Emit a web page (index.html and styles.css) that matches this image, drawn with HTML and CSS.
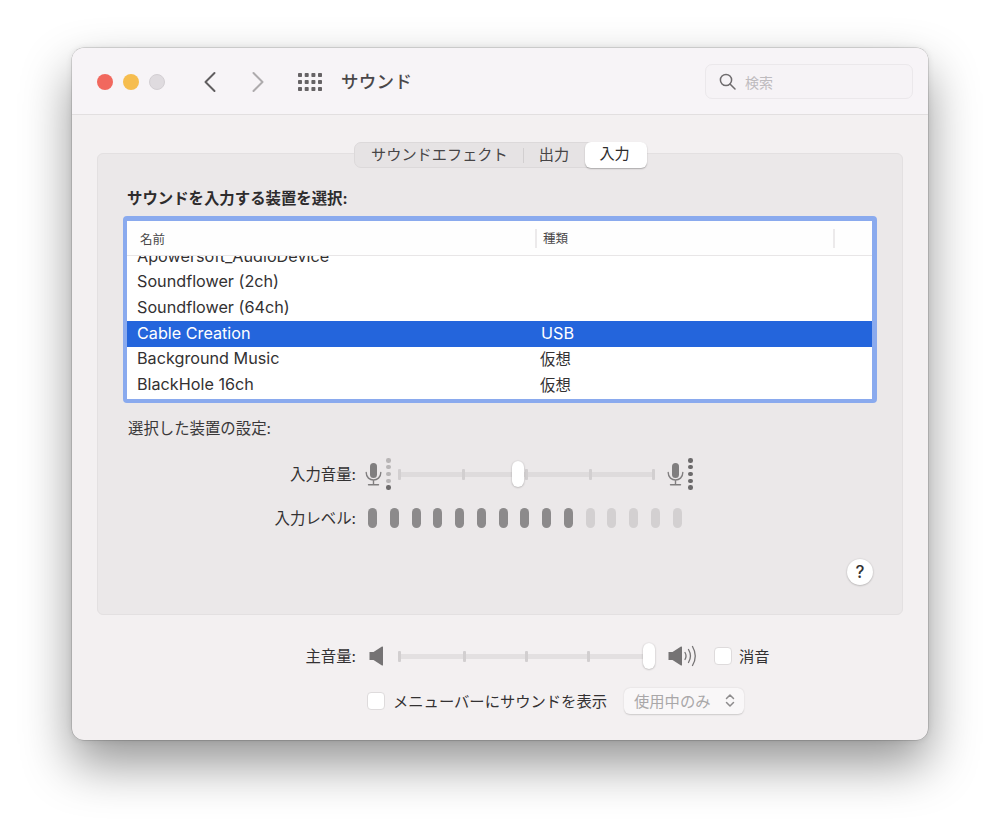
FILE: index.html
```html
<!DOCTYPE html>
<html lang="ja">
<head>
<meta charset="utf-8">
<title>サウンド</title>
<link rel="stylesheet" href="styles.css">
</head>
<body>
<main class="window">
  <header class="titlebar">
    <span class="light red"></span>
    <span class="light yellow"></span>
    <span class="light grey"></span>
    <svg class="chev back" width="14" height="22" viewBox="0 0 14 22"><path d="M11.5 2 2.5 11l9 9"/></svg>
    <svg class="chev forward" width="14" height="22" viewBox="0 0 14 22"><path d="M2.5 2l9 9-9 9"/></svg>
    <svg class="apps" width="24" height="18" viewBox="0 0 24 18">
      <g fill="#666365">
        <rect x="0" y="0" width="4" height="4" rx=".8"/><rect x="6.7" y="0" width="4" height="4" rx=".8"/><rect x="13.4" y="0" width="4" height="4" rx=".8"/><rect x="20" y="0" width="4" height="4" rx=".8"/>
        <rect x="0" y="7" width="4" height="4" rx=".8"/><rect x="6.7" y="7" width="4" height="4" rx=".8"/><rect x="13.4" y="7" width="4" height="4" rx=".8"/><rect x="20" y="7" width="4" height="4" rx=".8"/>
        <rect x="0" y="14" width="4" height="4" rx=".8"/><rect x="6.7" y="14" width="4" height="4" rx=".8"/><rect x="13.4" y="14" width="4" height="4" rx=".8"/><rect x="20" y="14" width="4" height="4" rx=".8"/>
      </g>
    </svg>
    <h1 class="title">サウンド</h1>
    <div class="search">
      <svg width="17" height="17" viewBox="0 0 17 17"><circle cx="7" cy="7" r="5.6"/><path d="M11 11l5 5"/></svg>
      <span>検索</span>
    </div>
  </header>

  <section class="panel">
    <nav class="tabs">
      <span class="tab first">サウンドエフェクト</span>
      <span class="tab-sep"></span>
      <span class="tab second">出力</span>
      <span class="tab active">入力</span>
    </nav>

    <h2 class="heading">サウンドを入力する装置を選択:</h2>

    <div class="list">
      <div class="list-head">
        <span class="col-name">名前</span>
        <span class="col-type">種類</span>
        <span class="col-end"></span>
      </div>
      <div class="list-body">
        <div class="row clipped"><span class="cell-name">Apowersoft_AudioDevice</span><span class="cell-type"></span></div>
        <div class="row"><span class="cell-name">Soundflower (2ch)</span><span class="cell-type"></span></div>
        <div class="row"><span class="cell-name">Soundflower (64ch)</span><span class="cell-type"></span></div>
        <div class="row selected"><span class="cell-name">Cable Creation</span><span class="cell-type">USB</span></div>
        <div class="row"><span class="cell-name">Background Music</span><span class="cell-type ja">仮想</span></div>
        <div class="row"><span class="cell-name">BlackHole 16ch</span><span class="cell-type ja">仮想</span></div>
      </div>
    </div>

    <p class="sub">選択した装置の設定:</p>

    <div class="form-row volume">
      <span class="label">入力音量:</span>
      <svg class="mic mic-low" width="17" height="24" viewBox="0 0 17 24"><rect class="cap" x="5" y="1" width="7" height="15" rx="3.5"/><path d="M1.2 10.5c0 10 14.6 10 14.6 0M8.5 18v4.5M3.5 22.8h10"/></svg>
      <span class="dots low"><i></i><i></i><i></i><i></i><i></i></span>
      <div class="slider input-slider">
        <i class="tick"></i><i class="tick"></i><i class="tick"></i><i class="tick"></i><i class="tick"></i>
        <b class="thumb input-thumb"></b>
      </div>
      <svg class="mic mic-high" width="17" height="24" viewBox="0 0 17 24"><rect class="cap" x="5" y="1" width="7" height="15" rx="3.5"/><path d="M1.2 10.5c0 10 14.6 10 14.6 0M8.5 18v4.5M3.5 22.8h10"/></svg>
      <span class="dots high"><i></i><i></i><i></i><i></i><i></i></span>
    </div>

    <div class="form-row level">
      <span class="label">入力レベル:</span>
      <div class="bars">
        <i class="on"></i><i class="on"></i><i class="on"></i><i class="on"></i><i class="on"></i><i class="on"></i><i class="on"></i><i class="on"></i><i class="on"></i><i class="on"></i><i></i><i></i><i></i><i></i><i></i>
      </div>
    </div>

    <div class="help-row"><span class="help">?</span></div>
  </section>

  <div class="main-row">
    <span class="label">主音量:</span>
    <svg class="spk spk-low" width="15" height="20" viewBox="0 0 15 20"><path class="solid" d="M0.5 6h4L13 .5c.6-.3 1 0 1 .6v17.8c0 .6-.4.9-1 .6L4.500 14h-4z"/></svg>
    <div class="slider main-slider">
      <i class="tick"></i><i class="tick"></i><i class="tick"></i><i class="tick"></i>
      <b class="thumb main-thumb"></b>
    </div>
    <svg class="spk spk-high" width="30" height="22" viewBox="0 0 30 22"><path class="solid" d="M0.500 7h4L13 1.500c.6-.3 1 0 1 .6v17.800c0 .6-.4.9-1 .6L4.500 15h-4z"/><path class="wave" d="M17 7.500c1.300 2.200 1.300 4.800 0 7M20.500 4.500c2.400 4 2.400 9 0 13M24.500 1.500c3.500 6 3.500 13 0 19"/></svg>
    <span class="check mute-check"></span>
    <span class="check-label">消音</span>
  </div>

  <div class="menu-row">
    <span class="check"></span>
    <span class="check-label menu-label">メニューバーにサウンドを表示</span>
    <div class="select">
      <span>使用中のみ</span>
      <svg width="10" height="15" viewBox="0 0 10 15"><path d="M1.500 5.500 5 2l3.500 3.500M1.500 9.500 5 13l3.500-3.500"/></svg>
    </div>
  </div>
</main>
</body>
</html>
```

FILE: styles.css
```css
* { box-sizing: border-box; }

html, body { margin: 0; height: 835px; overflow: hidden; background: #fff; }

body {
  padding: 48px 72px 0;
  font-family: "Inter", "Noto Sans CJK JP", sans-serif;
  color: #2e2c2d;
}

.window {
  width: 856px;
  height: 692px;
  border-radius: 12px;
  background: #f3f0f1;
  box-shadow: 0 0 0 .5px rgba(0, 0, 0, .22), 0 0 6px rgba(0, 0, 0, .1), 0 24px 50px rgba(0, 0, 0, .42);
}

.titlebar {
  height: 67px;
  display: flex;
  align-items: center;
  padding: 1px 0 0 25px;
  background: #f7f4f7;
  border-bottom: 1px solid #e2dfe0;
  border-radius: 12px 12px 0 0;
}

.light { width: 16px; height: 16px; border-radius: 50%; margin-right: 10px; }
.red { background: #f1685e; }
.yellow { background: #f6bd4f; }
.grey { background: #dfdbdf; border: 1px solid #d3cfd3; }

.chev { fill: none; stroke-width: 2; stroke-linecap: round; stroke-linejoin: round; }
.back { stroke: #605d5f; margin-left: 28px; }
.forward { stroke: #aeabad; margin-left: 34px; }
.apps { margin-left: 33px; }

.title {
  margin: 0 0 2px 19px;
  font-size: 17.500px;
  font-weight: 500;
  color: #4a4749;
  letter-spacing: 0.3px;
}

.search {
  margin-left: auto;
  margin-right: 15px;
  width: 208px;
  height: 35px;
  display: flex;
  align-items: center;
  gap: 9px;
  padding-left: 13px;
  border: 1px solid #ebe8eb;
  border-radius: 7px;
  background: #f6f3f6;
  font-size: 14px;
  color: #bebbbe;
}
.search svg { fill: none; stroke: #6f6c6e; stroke-width: 1.500; stroke-linecap: round; }

.panel {
  margin: 38px 25px 0;
  height: 462px;
  padding: 0 29px;
  border: 1px solid #e3e0e1;
  border-radius: 6px;
  background: #ebe8e9;
}

.tabs {
  width: 293px;
  height: 26px;
  margin: -12px 0 0 227px;
  display: flex;
  align-items: center;
  border: 1px solid #dcd9da;
  border-radius: 7px;
  background: #e6e3e4;
  font-size: 15.200px;
  color: #474546;
}
.tab { flex: none; line-height: 24px; white-space: nowrap; }
.first { margin-left: 16px; }
.tab-sep { flex: none; width: 1px; height: 15px; margin-left: 15px; background: #d2cfd0; }
.second { margin-left: 15px; }
.active {
  margin-left: 16px;
  width: 62px;
  height: 26px;
  margin-right: -1px;
  padding-right: 3px;
  text-align: center;
  border-radius: 6px;
  background: #fff;
  color: #2e2c2d;
  box-shadow: 0 1px 1.500px rgba(0, 0, 0, .28);
}

.heading {
  margin: 21px 0 7px;
  font-size: 15.400px;
  line-height: 20px;
  font-weight: 700;
  color: #2e2c2d;
}

.list {
  width: 754px;
  height: 187px;
  margin-left: -4px;
  border: 4px solid #8aaaee;
  border-width: 5px 5px 4px 4px;
  border-radius: 4px;
  background: #fff;
  overflow: hidden;
}

.list-head {
  height: 35px;
  position: relative;
  display: flex;
  align-items: center;
  background: #fefefe;
  border-bottom: 1px solid #e8e6e7;
  font-size: 12.500px;
  color: #4a4849;
}
.col-name { width: 408px; padding-left: 13px; }
.col-type { width: 298px; height: 19px; line-height: 19px; padding-left: 6px; border-left: 2px solid #eceaeb; }
.col-end { width: 2px; height: 19px; background: #eceaeb; }

.list-body { height: 143px; overflow: hidden; }

.row {
  height: 25.750px;
  display: flex;
  align-items: center;
  padding-bottom: 3px;
  font-size: 16.200px;
  color: #333132;
}
.clipped { height: 24.750px; margin-top: -11px; }
.selected { background: #2465dc; color: #fff; }
.cell-name { width: 414px; padding-left: 10px; }
.cell-type.ja { font-size: 15.400px; margin-left: -1px; }

.sub {
  margin: 16px 0 20px 1px;
  font-size: 15.400px;
  line-height: 20px;
  color: #3a3839;
}

.form-row { display: flex; align-items: center; }
.volume { height: 30px; }
.level { height: 24px; margin-top: 17px; }

.label {
  width: 229px;
  padding-bottom: 2px;
  text-align: right;
  font-size: 15.400px;
  color: #333132;
}

.mic { margin-left: 9px; fill: none; stroke: #807e7f; stroke-width: 1.400; stroke-linecap: round; }
.mic .cap { fill: #807e7f; stroke: none; }
.mic-high { margin-left: 12px; }

.dots { width: 6px; margin-left: 4px; display: flex; flex-direction: column; gap: 2.300px; }
.dots i { width: 4.500px; height: 4.500px; border-radius: 50%; background: #6c6a6b; }
.low i { background: #b8b5b6; }
.low i:last-child { background: #6c6a6b; }

.slider {
  position: relative;
  height: 8px;
  display: flex;
  justify-content: space-between;
  align-items: center;
  background: linear-gradient(#dedbdc, #dedbdc) center / 100% 5px no-repeat;
}
.tick { width: 3px; height: 11px; flex: none; border-radius: 1px; background: #d2cfd0; }

.input-slider { width: 257px; margin-left: 6px; }

.thumb {
  position: absolute;
  top: -9px;
  width: 12px;
  height: 26px;
  border-radius: 6px;
  background: #fff;
  box-shadow: 0 .5px 2px rgba(0, 0, 0, .3);
}
.input-thumb { left: 114px; }

.bars { display: flex; gap: 12.750px; margin-left: 12px; }
.bars i { width: 9px; height: 20px; border-radius: 4.500px; background: #d3d0d1; }
.bars .on { background: #8c8a8b; }

.help-row { display: flex; justify-content: flex-end; margin: 29px 0 0; }
.help {
  width: 26px;
  height: 26px;
  border-radius: 50%;
  background: #fff;
  box-shadow: 0 .5px 2px rgba(0, 0, 0, .3);
  text-align: center;
  font-size: 17px;
  font-weight: 500;
  line-height: 26px;
  color: #333132;
}

.main-row, .menu-row { display: flex; align-items: center; }

.main-row { height: 30px; margin-top: 26px; padding-left: 56px; }
.main-row .label { width: 228px; }

.spk .solid { fill: #757374; }
.spk .wave { fill: none; stroke: #757374; stroke-width: 1.300; stroke-linecap: round; }
.spk-low { margin-left: 13px; }

.main-slider {
  width: 251px;
  margin-left: 14px;
  justify-content: flex-start;
  gap: 59px;
  background-image: linear-gradient(#e3e0e1, #e3e0e1);
}
.main-slider .tick:first-child { margin-right: 3px; }
.main-thumb { left: 245px; }
.spk-high { margin-left: 19px; }

.check {
  width: 18px;
  height: 18px;
  flex: none;
  border-radius: 4px;
  border: 1px solid #dedbdc;
  background: #fff;
}
.mute-check { margin-left: 16px; }
.check-label { margin-left: 7px; padding-bottom: 2px; font-size: 15.300px; color: #333132; }

.menu-row { height: 26px; margin-top: 17px; padding-left: 295px; }
.menu-label { margin-left: 8px; }

.select {
  width: 120px;
  height: 26px;
  margin-left: 17px;
  display: flex;
  align-items: center;
  justify-content: space-between;
  padding: 0 9px 2px 10px;
  border-radius: 6px;
  background: #f9f7f8;
  box-shadow: 0 .5px 1.500px rgba(0, 0, 0, .16);
  font-size: 15.300px;
  color: #a9a7a8;
}
.select svg { fill: none; stroke: #8d8b8c; stroke-width: 1.500; stroke-linecap: round; stroke-linejoin: round; }
```
